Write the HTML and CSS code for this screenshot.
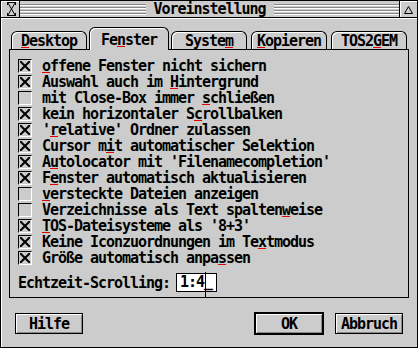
FILE: index.html
```html
<!DOCTYPE html>
<html lang="de">
<head>
  <meta charset="UTF-8">
  <title>Voreinstellung</title>
  <link rel="stylesheet" href="styles.css">
</head>
<body>

<div class="window">
  <div class="titlebar">
    <div class="closer">
      <svg width="9" height="14" viewBox="0 0 9 14"><path d="M0.5 0.5H8.5M0.5 13.5H8.5M1 1L8 13M8 1L1 13M0.5 0V3M8.5 0V3M0.5 11V14M8.5 11V14" stroke="#000" stroke-width="1" fill="none"/></svg>
    </div>
    <div class="stripes"></div>
    <div class="title">Voreinstellung</div>
    <div class="stripes"></div>
    <div class="fuller">
      <svg width="9" height="8" viewBox="0 0 9 8"><path d="M4.5 0.5L8.5 7.5H0.5Z" stroke="#000" stroke-width="1" fill="none"/></svg>
    </div>
  </div>

  <div class="content">
    <div class="tabs">
      <div class="tab"><span class="key">D</span>esktop</div>
      <div class="tab active">Fe<span class="key">n</span>ster</div>
      <div class="tab">Syste<span class="key">m</span></div>
      <div class="tab"><span class="key">K</span>opieren</div>
      <div class="tab">TOS2<span class="key">G</span>EM</div>
    </div>

    <div class="panel">
      <div class="options">
        <div class="option"><span class="check"><svg viewBox="0 0 10 10"><path d="M0 0L10 10M10 0L0 10"/></svg></span><span><span class="key">o</span>ffene Fenster nicht sichern</span></div>
        <div class="option"><span class="check"><svg viewBox="0 0 10 10"><path d="M0 0L10 10M10 0L0 10"/></svg></span><span>Auswahl auch im <span class="key">H</span>intergrund</span></div>
        <div class="option"><span class="check"></span><span>mit Close-Box immer <span class="key">s</span>chließen</span></div>
        <div class="option"><span class="check"><svg viewBox="0 0 10 10"><path d="M0 0L10 10M10 0L0 10"/></svg></span><span>kein horizontaler S<span class="key">c</span>rollbalken</span></div>
        <div class="option"><span class="check"><svg viewBox="0 0 10 10"><path d="M0 0L10 10M10 0L0 10"/></svg></span><span>'<span class="key">r</span>elative' Ordner zulassen</span></div>
        <div class="option"><span class="check"><svg viewBox="0 0 10 10"><path d="M0 0L10 10M10 0L0 10"/></svg></span><span>Cursor m<span class="key">i</span>t automatischer Selektion</span></div>
        <div class="option"><span class="check"><svg viewBox="0 0 10 10"><path d="M0 0L10 10M10 0L0 10"/></svg></span><span>A<span class="key">u</span>tolocator mit 'Filenamecompletion'</span></div>
        <div class="option"><span class="check"><svg viewBox="0 0 10 10"><path d="M0 0L10 10M10 0L0 10"/></svg></span><span>F<span class="key">e</span>nster automatisch aktualisieren</span></div>
        <div class="option"><span class="check"></span><span><span class="key">v</span>ersteckte Dateien anzeigen</span></div>
        <div class="option"><span class="check"></span><span>Verzeichnisse als Text spalten<span class="key">w</span>eise</span></div>
        <div class="option"><span class="check"><svg viewBox="0 0 10 10"><path d="M0 0L10 10M10 0L0 10"/></svg></span><span><span class="key">T</span>OS-Dateisysteme als '8+3'</span></div>
        <div class="option"><span class="check"><svg viewBox="0 0 10 10"><path d="M0 0L10 10M10 0L0 10"/></svg></span><span>Keine Iconzuordnungen im Te<span class="key">x</span>tmodus</span></div>
        <div class="option"><span class="check"><svg viewBox="0 0 10 10"><path d="M0 0L10 10M10 0L0 10"/></svg></span><span>Größe automatisch anpa<span class="key">s</span>sen</span></div>
      </div>

      <div class="scroll-row">
        <span>Echtzeit-Scrolling:</span>
        <span class="field">1:4_<span class="ibeam"></span></span>
      </div>
    </div>

    <div class="buttons">
      <button class="btn help">Hilfe</button>
      <button class="btn ok">OK</button>
      <button class="btn cancel">Abbruch</button>
    </div>
  </div>
</div>

</body>
</html>
```

FILE: styles.css
```css
* {
  margin: 0;
  padding: 0;
  box-sizing: border-box;
}

body {
  background-color: #cccccc;
  font-family: "DejaVu Sans Mono", "Liberation Mono", monospace;
  font-weight: bold;
  font-size: 15px;
  line-height: 16px;
  letter-spacing: -1.03px;
  color: #000;
}

.window {
  width: 418px;
  height: 348px;
  border: 1px solid #000;
  background-color: #cccccc;
  display: flex;
  flex-direction: column;
}

/* title bar */

.titlebar {
  height: 17px;
  border-bottom: 1px solid #000;
  display: flex;
  align-items: center;
}

.closer {
  width: 19px;
  height: 16px;
  border-right: 1px solid #000;
  box-shadow: inset 1px 1px 0 #fff;
  display: flex;
  align-items: center;
  justify-content: center;
  padding-left: 2px;
}

.fuller {
  width: 18px;
  height: 16px;
  border-left: 1px solid #000;
  box-shadow: inset 1px 1px 0 #fff;
  display: flex;
  align-items: center;
  justify-content: center;
  padding-top: 1px;
}

.stripes {
  flex: 1;
  height: 11px;
  margin-top: 1px;
  background: repeating-linear-gradient(to bottom, #888 0, #888 1px, #fff 1px, #fff 2px, transparent 2px, transparent 3px);
}

.stripes:first-of-type {
  margin-left: 2px;
}

.stripes:last-of-type {
  margin-right: 3px;
}

.title {
  margin: 0 8px;
  white-space: nowrap;
}

/* content */

.content {
  flex: 1;
  padding-top: 9px;
  box-shadow: inset 1px 1px 0 #fff;
  display: flex;
  flex-direction: column;
}

.tabs {
  display: flex;
  align-items: flex-end;
  gap: 4px;
  padding-left: 10px;
  height: 22px;
}

.tab {
  width: 76px;
  height: 18px;
  padding-top: 1px;
  border: 1px solid #000;
  border-bottom: none;
  border-radius: 6px 6px 0 0;
  box-shadow: inset 1px 1px 0 #fff;
  background-color: #cccccc;
  text-align: center;
  white-space: nowrap;
}

.tab.active {
  position: relative;
  z-index: 1;
  width: 80px;
  height: 23px;
  margin: 0 -2px -1px;
  padding-top: 4px;
}

.key {
  text-decoration: underline #e00000;
  text-decoration-thickness: 1px;
  text-underline-offset: 1px;
}

.panel {
  height: 249px;
  margin: 0 8px;
  border: 1px solid #000;
  padding: 8px 8px 0;
}

.option {
  height: 16px;
  display: flex;
  align-items: center;
  gap: 10px;
  white-space: nowrap;
}

.check {
  flex: none;
  width: 14px;
  height: 14px;
  border: 1px solid;
  border-color: #000 #fff #fff #000;
  display: flex;
  align-items: center;
  justify-content: center;
}

.check svg {
  width: 10px;
  height: 10px;
  stroke: #000;
  stroke-width: 2;
}

.scroll-row {
  margin-top: 7px;
  display: flex;
  align-items: center;
  gap: 6px;
  white-space: nowrap;
}

.field {
  position: relative;
  height: 19px;
  border: 1px solid #000;
  background-color: #fff;
  padding: 0 4px 0 3px;
  line-height: 17px;
}

.ibeam {
  position: absolute;
  left: 28px;
  top: -2px;
  width: 1px;
  height: 26px;
  background-color: #000;
}

/* buttons */

.buttons {
  margin-top: 14px;
  padding: 0 14px;
  display: flex;
  align-items: center;
  gap: 11px;
}

.btn {
  height: 21px;
  border: 1px solid #000;
  background-color: #cccccc;
  box-shadow: inset 1px 1px 0 #fff, inset -1px -1px 0 #888;
  font: inherit;
  letter-spacing: inherit;
  color: #000;
  text-align: center;
}

.help {
  width: 68px;
  margin-right: auto;
}

.ok {
  width: 70px;
  height: 23px;
  border-width: 2px;
}

.cancel {
  width: 68px;
}
```
